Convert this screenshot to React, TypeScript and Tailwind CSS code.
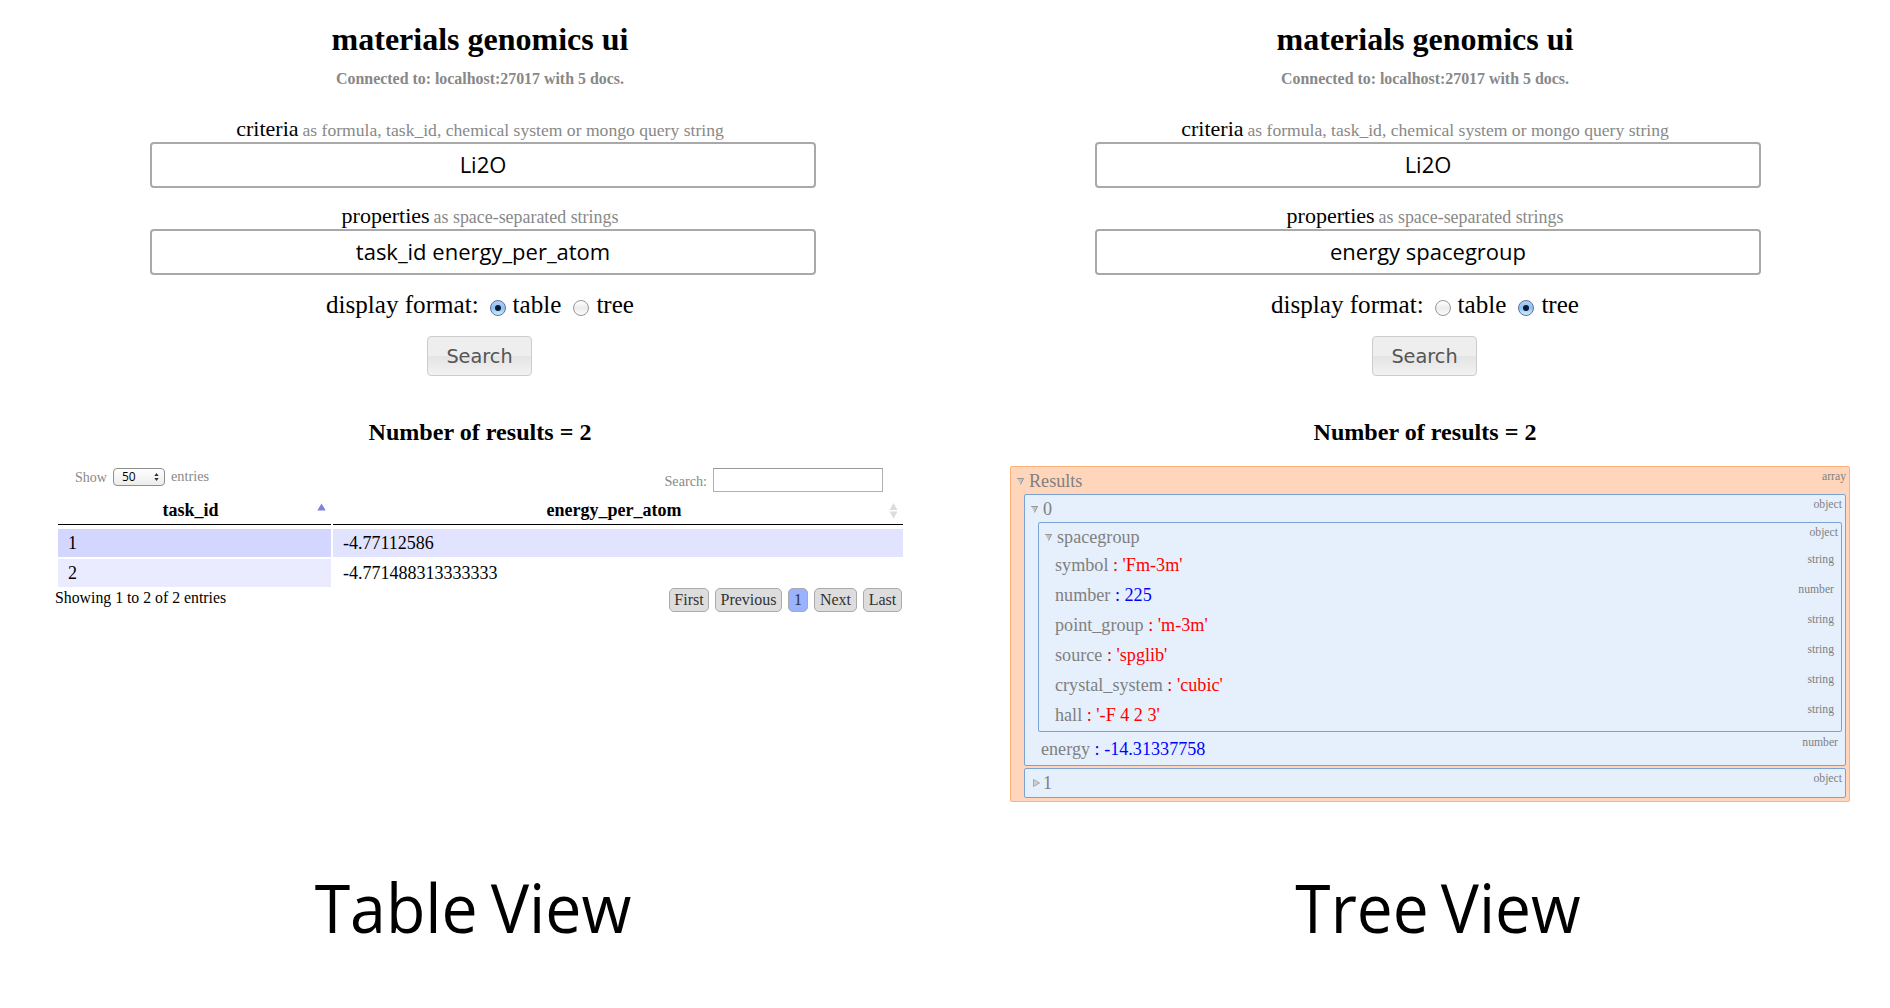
import type { ReactNode } from 'react';

type View = 'table' | 'tree';

function Radio({ checked }: { checked: boolean }) {
  return checked ? (
    <span className="mt-[6px] flex size-4 items-center justify-center rounded-full border border-[#5c6f9c] bg-linear-to-b from-[#b4d0f4] via-[#8fc0f2] to-[#c9f0ff]">
      <span className="size-[6px] rounded-full bg-[#0b1a33]" />
    </span>
  ) : (
    <span className="mt-[6px] size-4 rounded-full border border-[#979797] bg-linear-to-b from-white via-[#ececec] to-[#fbfbfb]" />
  );
}

function Field({ label, hint, hintClass, value }: { label: string; hint: string; hintClass: string; value: string }) {
  return (
    <div>
      <div className="flex h-6 items-baseline justify-center text-[22px] leading-6">
        <span>{label}</span>
        <span className={`ml-[4px] text-[#888] ${hintClass}`}>{hint}</span>
      </div>
      <div className="mt-px ml-[135px] flex h-[46px] w-[666px] items-center justify-center rounded-[4px] border-2 border-[#a9a9a9] pb-[2px] font-['Open_Sans',sans-serif] text-[22px] leading-6">
        {value}
      </div>
    </div>
  );
}

function Panel({ view, properties, caption, children }: { view: View; properties: string; caption: ReactNode; children: ReactNode }) {
  return (
    <section className="h-[1008px] w-[945px] pt-[19px] pl-[15px]">
      <h1 className="text-center text-[32px] leading-10 font-bold">materials genomics ui</h1>
      <p className="mt-[10px] text-center text-[15.9px] leading-5 font-bold text-[#888]">
        Connected to: localhost:27017 with 5 docs.
      </p>
      <div className="mt-7">
        <Field
          label="criteria"
          hint="as formula, task_id, chemical system or mongo query string"
          hintClass="text-[17.6px]"
          value="Li2O"
        />
      </div>
      <div className="mt-4">
        <Field label="properties" hint="as space-separated strings" hintClass="text-[17.9px]" value={properties} />
      </div>
      <div className="mt-[14px] flex h-[30px] items-center justify-center pt-[2px] text-[25.1px] leading-[30px]">
        <span className="mr-[11px]">display format:</span>
        <Radio checked={view === 'table'} />
        <span className="mr-3 ml-[7px]">table</span>
        <Radio checked={view === 'tree'} />
        <span className="ml-[7px]">tree</span>
      </div>
      <div className="mt-[17px] ml-[412px] flex">
        <button className="h-10 w-[105px] rounded-[4px] border border-[#ccc] bg-linear-to-b from-[#eee] from-50% via-[#e4e4e4] via-50% to-[#f2f2f2] pt-[2px] font-['DejaVu_Sans',sans-serif] text-[19.3px] text-[#555]">
          Search
        </button>
      </div>
      <h2 className="mt-[41px] text-center text-[24.1px] leading-[30px] font-bold">Number of results = 2</h2>
      <div className="mt-[19px] h-[400px]">{children}</div>
      {caption}
    </section>
  );
}

function PageButton({ children, className }: { children: ReactNode; className: string }) {
  return (
    <span className={`flex h-6 items-center justify-center rounded-[5px] border border-[#aaa] text-[#333] ${className}`}>
      {children}
    </span>
  );
}

function ResultsTable() {
  return (
    <div className="pl-10">
      <div className="flex h-[33px] w-[848px] items-start justify-between text-[14px] text-[#888]">
        <div className="flex h-[22px] items-center pl-5">
          <span className="w-[38px]">Show</span>
          <span className="mr-[6px] flex h-[18px] w-[52px] items-center justify-between rounded-[4px] border border-[#8f8f8f] bg-linear-to-b from-white to-[#ececec] pr-[5px] pl-[8px] font-['Open_Sans',sans-serif] text-[12px] leading-4 font-medium text-black">
            50
            <svg width="5" height="8" viewBox="0 0 5 8" fill="#333">
              <path d="M2.500 0L4.700 3H.3zM2.500 8L.3 5h4.400z" />
            </svg>
          </span>
          <span className="text-[14.3px]">entries</span>
        </div>
        <div className="flex items-center pt-[2px] pr-5">
          <span className="mr-[6px] pt-[3px] text-[14.2px]">Search:</span>
          <span className="h-6 w-[170px] border border-t-[#999] border-r-[#b0b0b0] border-b-[#b0b0b0] border-l-[#b0b0b0] bg-white" />
        </div>
      </div>
      <div className="grid w-[848px] grid-cols-[273px_570px] gap-x-[2px] pl-[3px] text-[18px] leading-7">
        <div className="flex h-[26px] border-b border-black leading-[22px] font-bold">
          <span className="flex-1 pl-[6px] text-center">task_id</span>
          <svg className="mt-[4px] mr-[5px]" width="9" height="8" viewBox="0 0 9 8" fill="#7d80dc">
            <path d="M4.500 .5L8.700 7.500H.3z" />
          </svg>
        </div>
        <div className="flex h-[26px] border-b border-black leading-[22px] font-bold">
          <span className="flex-1 pl-[6px] text-center">energy_per_atom</span>
          <svg className="mt-[4px] mr-[5px]" width="9" height="16" viewBox="0 0 9 16" fill="#dcdcdc">
            <path d="M4.500 0L8.500 7H.5zM4.500 15.500L.5 8.500h8z" />
          </svg>
        </div>
        <div className="mt-1 bg-[#d3d6ff] pl-[10px]">1</div>
        <div className="mt-1 bg-[#e2e4ff] pl-[10px]">-4.77112586</div>
        <div className="mt-[2px] bg-[#eaebff] pl-[10px]">2</div>
        <div className="mt-[2px] pl-[10px]">-4.771488313333333</div>
      </div>
      <div className="flex w-[847px] justify-between text-base leading-5">
        <span className="pt-px text-[15.800px]">Showing 1 to 2 of 2 entries</span>
        <div className="mt-px flex gap-[6px]">
          <PageButton className="w-10 bg-[#ddd]">First</PageButton>
          <PageButton className="w-[67px] bg-[#ddd]">Previous</PageButton>
          <PageButton className="w-5 bg-[#99b3ff]">1</PageButton>
          <PageButton className="w-[43px] bg-[#ddd]">Next</PageButton>
          <PageButton className="w-[39px] bg-[#ddd]">Last</PageButton>
        </div>
      </div>
    </div>
  );
}

function Arrow({ open }: { open: boolean }) {
  return open ? (
    <svg className="mr-[5px] shrink-0" width="7" height="7" viewBox="0 0 7 7">
      <path d="M.5 .5h6L3.500 6.500z" fill="#c4c4c4" />
      <path d="M0 .5h7M6.500 .5L3.500 6.500" stroke="#999" strokeWidth="1" fill="none" />
    </svg>
  ) : (
    <svg className="mr-[3px] ml-[2px] shrink-0" width="7" height="8" viewBox="0 0 7 8">
      <path d="M.5 .5v7L6.500 4z" fill="#d0d0d0" />
      <path d="M.5 .5v7L6.500 4z" stroke="#999" strokeWidth=".8" fill="none" />
    </svg>
  );
}

function TypeLabel({ className, children }: { className: string; children: ReactNode }) {
  return <span className={`self-start text-[11.700px] leading-[14px] ${className}`}>{children}</span>;
}

function Node({ name, type, className, headClass = 'h-[26px] pt-[2px]', open = true, children }: {
  name: string; type: string; className: string; headClass?: string; open?: boolean; children?: ReactNode;
}) {
  return (
    <div className={`rounded-[2px] border pr-[3px] ${className}`}>
      <div className="flex justify-between">
        <div className={`flex items-center pl-[6px] ${headClass}`}>
          <Arrow open={open} />
          <span className="pt-[2px]">{name}</span>
        </div>
        <TypeLabel className="pt-[3px]">{type}</TypeLabel>
      </div>
      <div className="pl-[13px]">{children}</div>
    </div>
  );
}

function Leaf({ name, value, type, className }: { name: string; value: string; type: 'string' | 'number'; className: string }) {
  return (
    <div className={`flex justify-between ${className}`}>
      <span className="pt-px pl-[3px]">
        {name}
        <span className={type === 'string' ? 'text-[#f00]' : 'text-[#00f]'}> : {value}</span>
      </span>
      <TypeLabel className="pt-[4px] pr-[4px]">{type}</TypeLabel>
    </div>
  );
}

const blue = 'border-[#7aa3d4] bg-[#e6f0fd]';

const spacegroup: [string, string, 'string' | 'number'][] = [
  ['symbol', "'Fm-3m'", 'string'],
  ['number', '225', 'number'],
  ['point_group', "'m-3m'", 'string'],
  ['source', "'spglib'", 'string'],
  ['crystal_system', "'cubic'", 'string'],
  ['hall', "'-F 4 2 3'", 'string'],
];

function ResultsTree() {
  return (
    <div className="pr-10 pl-[50px] text-[18.150px] text-[#808080]">
      <Node name="Results" type="array" className="h-[336px] border-[#ffb277] bg-[#ffd6bb]">
        <Node name="0" type="object" className={`mt-px h-[272px] ${blue}`}>
          <Node name="spacegroup" type="object" className={`mt-px h-[210px] ${blue}`}>
            {spacegroup.map(([name, value, type]) => (
              <Leaf key={name} name={name} value={value} type={type} className="h-[30px] leading-[30px]" />
            ))}
          </Node>
          <Leaf name="energy" value="-14.31337758" type="number" className="h-[33px] leading-[33px]" />
        </Node>
        <Node name="1" type="object" open={false} headClass="h-7" className={`mt-[2px] h-[30px] ${blue}`} />
      </Node>
    </div>
  );
}

export default function App() {
  const captionStyle =
    "h-20 pt-px text-center font-['Open_Sans',sans-serif] text-[68.500px] leading-[80px] whitespace-nowrap";
  return (
    <main className="flex h-[1008px] w-[1890px] overflow-hidden bg-white font-['Liberation_Serif',serif] text-black">
      <Panel
        view="table"
        properties="task_id energy_per_atom"
        caption={<div className={`w-[916px] scale-x-[0.94] [word-spacing:-4px] ${captionStyle}`}>Table View</div>}
      >
        <ResultsTable />
      </Panel>
      <Panel
        view="tree"
        properties="energy spacegroup"
        caption={<div className={`w-[956px] scale-x-[0.935] [word-spacing:-5px] ${captionStyle}`}>Tree View</div>}
      >
        <ResultsTree />
      </Panel>
    </main>
  );
}
